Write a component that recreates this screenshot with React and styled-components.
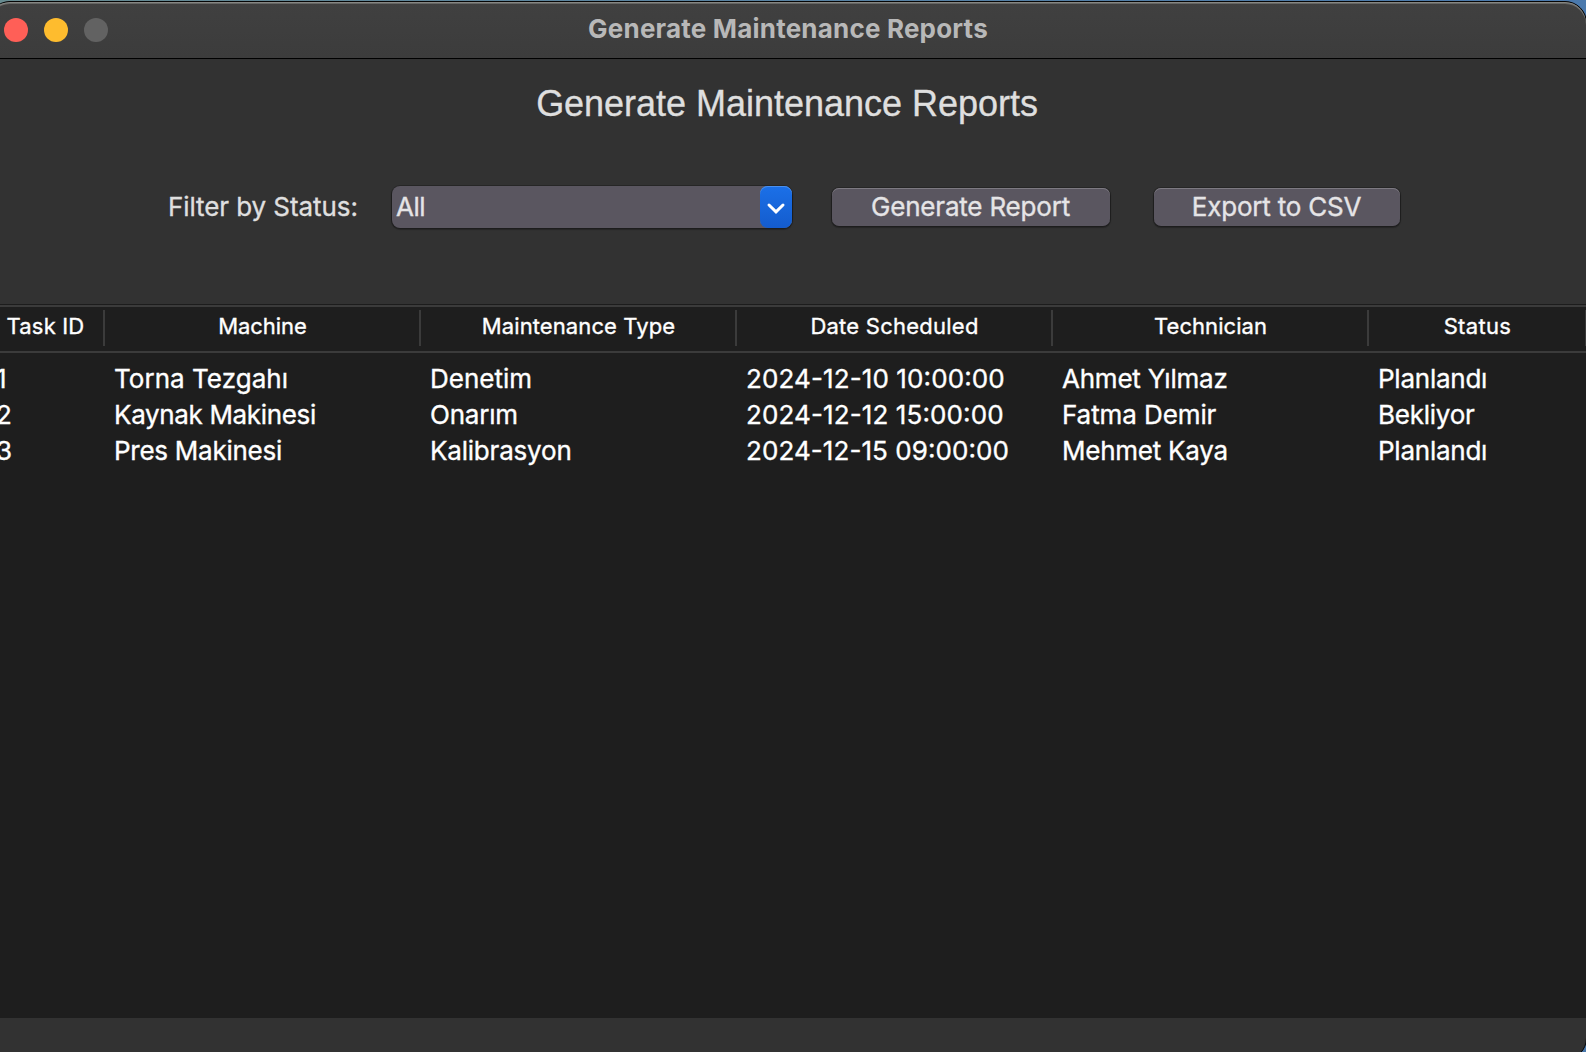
import React from 'react';
import styled, { createGlobalStyle } from 'styled-components';

const GlobalStyle = createGlobalStyle`
  * { box-sizing: border-box; }
  html, body { margin: 0; padding: 0; background: #1e1e1e; }
  body { font-family: Inter, "Noto Sans", sans-serif; overflow: hidden; }
`;

const Desktop = styled.div`
  width: 1586px;
  height: 1052px;
  overflow: hidden;
  padding-top: 1px;
  background: linear-gradient(90deg, #678b90 0%, #5b84a0 40%, #4a79ad 100%);
`;

const Window = styled.main`
  display: flex;
  flex-direction: column;
  width: 1599px;
  height: 1059px;
  margin-left: -12px;
  border: 1px solid #050505;
  border-radius: 22px;
  overflow: hidden;
  background: #323232;
`;

const TitleBar = styled.header`
  display: grid;
  grid-template-columns: 1fr auto 1fr;
  align-items: center;
  flex: none;
  height: 57px;
  padding: 0 15px;
  border-bottom: 1px solid #000;
  border-radius: 21px 21px 0 0;
  background: linear-gradient(#404040, #3c3c3c);
  box-shadow: inset 0 1px 0 #858683, inset 0 2px 0 #666664;
`;

const Lights = styled.div`
  display: flex;
  gap: 16px;
`;

const Light = styled.span`
  width: 24px;
  height: 24px;
  border-radius: 50%;
  background: ${(p) => p.$color};
`;

const WindowTitle = styled.div`
  padding: 0 0 3px 1px;
  font-size: 26px;
  font-weight: 700;
  line-height: 32px;
  letter-spacing: 0.2px;
  color: #b8b8b8;
`;

const Heading = styled.h1`
  flex: none;
  margin: 24px 1px 61px 0;
  font: 400 36px/42px "Liberation Sans", Arial, sans-serif;
  letter-spacing: -0.02px;
  -webkit-text-stroke: 0.35px currentColor;
  text-align: center;
  color: #dfdfdf;
`;

const Toolbar = styled.section`
  display: flex;
  align-items: center;
  flex: none;
  height: 42px;
  margin-bottom: 76px;
  padding-left: 179px;
  font-size: 26px;
  line-height: 32px;
  -webkit-text-stroke: 0.35px currentColor;
  color: #dfdfdf;
`;

const Label = styled.label`
  width: 224px;
  letter-spacing: -0.08px;
`;

const ComboBox = styled.div`
  display: flex;
  align-items: center;
  width: 400px;
  height: 42px;
  margin-right: 40px;
  border-radius: 8px;
  background: #5a5660;
  box-shadow: 0 0 0 1px rgba(0, 0, 0, 0.2), 0 1px 1px 1px rgba(0, 0, 0, 0.25);
`;

const ComboValue = styled.span`
  flex: 1;
  padding-left: 4px;
  letter-spacing: -0.5px;
  color: #e5e4e6;
`;

const ComboArrow = styled.span`
  display: flex;
  width: 32px;
  height: 42px;
  border-radius: 8px;
  background: linear-gradient(#1b70e8, #145ccd);
  box-shadow: inset 0 1px 0 #4a90ee;
`;

const Button = styled.button`
  width: ${(p) => p.$width}px;
  height: 38px;
  margin: 0 44px 0 0;
  padding: 0 1px 0 0;
  border: 0;
  border-radius: 7px;
  background: #5a5660;
  box-shadow: inset 0 1px 0 #7d7a82, 0 0 0 1px rgba(0, 0, 0, 0.2),
    0 1px 1px 1px rgba(0, 0, 0, 0.25);
  font: inherit;
  letter-spacing: -0.2px;
  color: #e5e4e6;
`;

const Table = styled.section`
  flex: none;
  height: 714px;
  border-top: 1px solid #1c1c1c;
  background: #1e1e1e;
  color: #fff;
`;

const Row = styled.div`
  display: grid;
  grid-template-columns: 118px repeat(4, 316px) 218px;
  width: 1600px;
  margin-left: -2px;
`;

const HeaderRow = styled(Row)`
  height: 48px;
  border-top: 2px solid #3b3b3b;
  border-bottom: 2px solid #3b3b3b;
`;

const HeaderCell = styled.div`
  height: 36px;
  margin-top: 3px;
  padding: 3px 0 0 1px;
  border-right: 2px solid #3b3b3b;
  font-size: 22px;
  line-height: 26px;
  -webkit-text-stroke: 0.35px currentColor;
  letter-spacing: ${(p) => p.$track}px;
  text-align: center;
`;

const Rows = styled.div`
  padding-top: 8px;
`;

const Cell = styled.div`
  padding-left: 9px;
  font-size: 26px;
  line-height: 36px;
  letter-spacing: ${(p) => p.$track}px;
  -webkit-text-stroke: 0.35px currentColor;
  white-space: nowrap;
  font-feature-settings: ${(p) => (p.$date ? '"case" 1' : 'normal')};
`;

const columns = [
  ['Task ID', 0.18],
  ['Machine', -0.05],
  ['Maintenance Type', 0.1],
  ['Date Scheduled', 0.24],
  ['Technician', 0.06],
  ['Status', 0.35],
];

const tasks = [
  [['1', 0], ['Torna Tezgahı', 0.04], ['Denetim', 0], ['2024-12-10 10:00:00', 0.11], ['Ahmet Yılmaz', -0.23], ['Planlandı', -0.24]],
  [['2', 0], ['Kaynak Makinesi', -0.34], ['Onarım', -0.2], ['2024-12-12 15:00:00', 0.11], ['Fatma Demir', -0.09], ['Bekliyor', -0.24]],
  [['3', 0], ['Pres Makinesi', -0.26], ['Kalibrasyon', -0.2], ['2024-12-15 09:00:00', 0.07], ['Mehmet Kaya', -0.24], ['Planlandı', -0.24]],
];

export default function App() {
  return (
    <>
      <GlobalStyle />
      <Desktop>
        <Window>
          <TitleBar>
            <Lights>
              <Light $color="#ff5f57" />
              <Light $color="#febc2e" />
              <Light $color="#626262" />
            </Lights>
            <WindowTitle>Generate Maintenance Reports</WindowTitle>
          </TitleBar>
          <Heading>Generate Maintenance Reports</Heading>
          <Toolbar>
            <Label>Filter by Status:</Label>
            <ComboBox>
              <ComboValue>All</ComboValue>
              <ComboArrow>
                <svg width="32" height="42" viewBox="0 0 32 42" fill="none">
                  <path d="M9 19L16 25.8L23 19" stroke="#fff" strokeWidth="3" strokeLinecap="round" />
                </svg>
              </ComboArrow>
            </ComboBox>
            <Button $width={278}>Generate Report</Button>
            <Button $width={246}>Export to CSV</Button>
          </Toolbar>
          <Table>
            <HeaderRow>
              {columns.map(([name, track]) => (
                <HeaderCell key={name} $track={track}>{name}</HeaderCell>
              ))}
            </HeaderRow>
            <Rows>
              {tasks.map((task) => (
                <Row key={task[0][0]}>
                  {task.map(([text, track], i) => (
                    <Cell key={i} $date={i === 3} $track={track}>{text}</Cell>
                  ))}
                </Row>
              ))}
            </Rows>
          </Table>
        </Window>
      </Desktop>
    </>
  );
}
